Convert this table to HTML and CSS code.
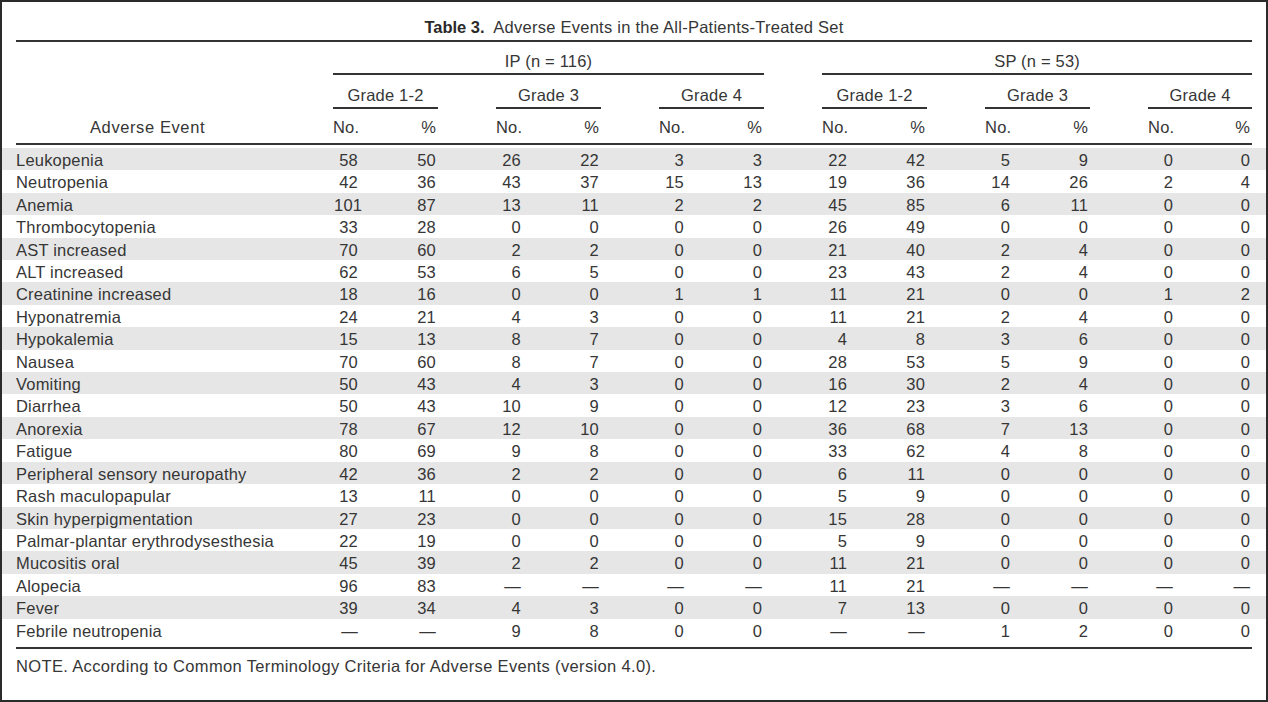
FILE: index.html
```html
<!DOCTYPE html>
<html lang="en">
<head>
<meta charset="utf-8">
<title>Table 3. Adverse Events in the All-Patients-Treated Set</title>
<link rel="stylesheet" href="styles.css">
</head>
<body>
<div class="frame">
  <h1 class="title"><b>Table 3.</b>&nbsp; Adverse Events in the All-Patients-Treated Set</h1>
  <table class="ae">
    <colgroup>
      <col class="c-edge"><col class="c-label">
      <col class="c-n"><col class="c-p"><col class="c-gap">
      <col class="c-n"><col class="c-p"><col class="c-gap">
      <col class="c-n"><col class="c-p"><col class="c-gap">
      <col class="c-n"><col class="c-p"><col class="c-gap">
      <col class="c-n"><col class="c-p"><col class="c-gap">
      <col class="c-n"><col class="c-plast"><col class="c-edge">
    </colgroup>
    <thead>
      <tr class="r1">
        <th class="edge"></th><th></th>
        <th colspan="8" class="ul">IP (n = 116)</th>
        <th></th>
        <th colspan="8" class="ul">SP (n = 53)</th>
        <th class="edge"></th>
      </tr>
      <tr class="r2">
        <th class="edge"></th><th></th>
        <th colspan="2" class="ul">Grade 1-2</th><th></th>
        <th colspan="2" class="ul">Grade 3</th><th></th>
        <th colspan="2" class="ul">Grade 4</th><th></th>
        <th colspan="2" class="ul">Grade 1-2</th><th></th>
        <th colspan="2" class="ul">Grade 3</th><th></th>
        <th colspan="2" class="ul">Grade 4</th>
        <th class="edge"></th>
      </tr>
      <tr class="r3">
        <th class="edge"></th><th class="lbl">Adverse Event</th>
        <th class="n">No.</th><th class="p">%</th><th></th>
        <th class="n">No.</th><th class="p">%</th><th></th>
        <th class="n">No.</th><th class="p">%</th><th></th>
        <th class="n">No.</th><th class="p">%</th><th></th>
        <th class="n">No.</th><th class="p">%</th><th></th>
        <th class="n">No.</th><th class="p">%</th>
        <th class="edge"></th>
      </tr>
    </thead>
    <tbody>
      <tr><td></td><td class="lbl">Leukopenia</td><td class="n">58</td><td class="p">50</td><td></td><td class="n">26</td><td class="p">22</td><td></td><td class="n">3</td><td class="p">3</td><td></td><td class="n">22</td><td class="p">42</td><td></td><td class="n">5</td><td class="p">9</td><td></td><td class="n">0</td><td class="p">0</td><td></td></tr>
      <tr><td></td><td class="lbl">Neutropenia</td><td class="n">42</td><td class="p">36</td><td></td><td class="n">43</td><td class="p">37</td><td></td><td class="n">15</td><td class="p">13</td><td></td><td class="n">19</td><td class="p">36</td><td></td><td class="n">14</td><td class="p">26</td><td></td><td class="n">2</td><td class="p">4</td><td></td></tr>
      <tr><td></td><td class="lbl">Anemia</td><td class="n">101</td><td class="p">87</td><td></td><td class="n">13</td><td class="p">11</td><td></td><td class="n">2</td><td class="p">2</td><td></td><td class="n">45</td><td class="p">85</td><td></td><td class="n">6</td><td class="p">11</td><td></td><td class="n">0</td><td class="p">0</td><td></td></tr>
      <tr><td></td><td class="lbl">Thrombocytopenia</td><td class="n">33</td><td class="p">28</td><td></td><td class="n">0</td><td class="p">0</td><td></td><td class="n">0</td><td class="p">0</td><td></td><td class="n">26</td><td class="p">49</td><td></td><td class="n">0</td><td class="p">0</td><td></td><td class="n">0</td><td class="p">0</td><td></td></tr>
      <tr><td></td><td class="lbl">AST increased</td><td class="n">70</td><td class="p">60</td><td></td><td class="n">2</td><td class="p">2</td><td></td><td class="n">0</td><td class="p">0</td><td></td><td class="n">21</td><td class="p">40</td><td></td><td class="n">2</td><td class="p">4</td><td></td><td class="n">0</td><td class="p">0</td><td></td></tr>
      <tr><td></td><td class="lbl">ALT increased</td><td class="n">62</td><td class="p">53</td><td></td><td class="n">6</td><td class="p">5</td><td></td><td class="n">0</td><td class="p">0</td><td></td><td class="n">23</td><td class="p">43</td><td></td><td class="n">2</td><td class="p">4</td><td></td><td class="n">0</td><td class="p">0</td><td></td></tr>
      <tr><td></td><td class="lbl">Creatinine increased</td><td class="n">18</td><td class="p">16</td><td></td><td class="n">0</td><td class="p">0</td><td></td><td class="n">1</td><td class="p">1</td><td></td><td class="n">11</td><td class="p">21</td><td></td><td class="n">0</td><td class="p">0</td><td></td><td class="n">1</td><td class="p">2</td><td></td></tr>
      <tr><td></td><td class="lbl">Hyponatremia</td><td class="n">24</td><td class="p">21</td><td></td><td class="n">4</td><td class="p">3</td><td></td><td class="n">0</td><td class="p">0</td><td></td><td class="n">11</td><td class="p">21</td><td></td><td class="n">2</td><td class="p">4</td><td></td><td class="n">0</td><td class="p">0</td><td></td></tr>
      <tr><td></td><td class="lbl">Hypokalemia</td><td class="n">15</td><td class="p">13</td><td></td><td class="n">8</td><td class="p">7</td><td></td><td class="n">0</td><td class="p">0</td><td></td><td class="n">4</td><td class="p">8</td><td></td><td class="n">3</td><td class="p">6</td><td></td><td class="n">0</td><td class="p">0</td><td></td></tr>
      <tr><td></td><td class="lbl">Nausea</td><td class="n">70</td><td class="p">60</td><td></td><td class="n">8</td><td class="p">7</td><td></td><td class="n">0</td><td class="p">0</td><td></td><td class="n">28</td><td class="p">53</td><td></td><td class="n">5</td><td class="p">9</td><td></td><td class="n">0</td><td class="p">0</td><td></td></tr>
      <tr><td></td><td class="lbl">Vomiting</td><td class="n">50</td><td class="p">43</td><td></td><td class="n">4</td><td class="p">3</td><td></td><td class="n">0</td><td class="p">0</td><td></td><td class="n">16</td><td class="p">30</td><td></td><td class="n">2</td><td class="p">4</td><td></td><td class="n">0</td><td class="p">0</td><td></td></tr>
      <tr><td></td><td class="lbl">Diarrhea</td><td class="n">50</td><td class="p">43</td><td></td><td class="n">10</td><td class="p">9</td><td></td><td class="n">0</td><td class="p">0</td><td></td><td class="n">12</td><td class="p">23</td><td></td><td class="n">3</td><td class="p">6</td><td></td><td class="n">0</td><td class="p">0</td><td></td></tr>
      <tr><td></td><td class="lbl">Anorexia</td><td class="n">78</td><td class="p">67</td><td></td><td class="n">12</td><td class="p">10</td><td></td><td class="n">0</td><td class="p">0</td><td></td><td class="n">36</td><td class="p">68</td><td></td><td class="n">7</td><td class="p">13</td><td></td><td class="n">0</td><td class="p">0</td><td></td></tr>
      <tr><td></td><td class="lbl">Fatigue</td><td class="n">80</td><td class="p">69</td><td></td><td class="n">9</td><td class="p">8</td><td></td><td class="n">0</td><td class="p">0</td><td></td><td class="n">33</td><td class="p">62</td><td></td><td class="n">4</td><td class="p">8</td><td></td><td class="n">0</td><td class="p">0</td><td></td></tr>
      <tr><td></td><td class="lbl">Peripheral sensory neuropathy</td><td class="n">42</td><td class="p">36</td><td></td><td class="n">2</td><td class="p">2</td><td></td><td class="n">0</td><td class="p">0</td><td></td><td class="n">6</td><td class="p">11</td><td></td><td class="n">0</td><td class="p">0</td><td></td><td class="n">0</td><td class="p">0</td><td></td></tr>
      <tr><td></td><td class="lbl">Rash maculopapular</td><td class="n">13</td><td class="p">11</td><td></td><td class="n">0</td><td class="p">0</td><td></td><td class="n">0</td><td class="p">0</td><td></td><td class="n">5</td><td class="p">9</td><td></td><td class="n">0</td><td class="p">0</td><td></td><td class="n">0</td><td class="p">0</td><td></td></tr>
      <tr><td></td><td class="lbl">Skin hyperpigmentation</td><td class="n">27</td><td class="p">23</td><td></td><td class="n">0</td><td class="p">0</td><td></td><td class="n">0</td><td class="p">0</td><td></td><td class="n">15</td><td class="p">28</td><td></td><td class="n">0</td><td class="p">0</td><td></td><td class="n">0</td><td class="p">0</td><td></td></tr>
      <tr><td></td><td class="lbl">Palmar-plantar erythrodysesthesia</td><td class="n">22</td><td class="p">19</td><td></td><td class="n">0</td><td class="p">0</td><td></td><td class="n">0</td><td class="p">0</td><td></td><td class="n">5</td><td class="p">9</td><td></td><td class="n">0</td><td class="p">0</td><td></td><td class="n">0</td><td class="p">0</td><td></td></tr>
      <tr><td></td><td class="lbl">Mucositis oral</td><td class="n">45</td><td class="p">39</td><td></td><td class="n">2</td><td class="p">2</td><td></td><td class="n">0</td><td class="p">0</td><td></td><td class="n">11</td><td class="p">21</td><td></td><td class="n">0</td><td class="p">0</td><td></td><td class="n">0</td><td class="p">0</td><td></td></tr>
      <tr><td></td><td class="lbl">Alopecia</td><td class="n">96</td><td class="p">83</td><td></td><td class="n">—</td><td class="p">—</td><td></td><td class="n">—</td><td class="p">—</td><td></td><td class="n">11</td><td class="p">21</td><td></td><td class="n">—</td><td class="p">—</td><td></td><td class="n">—</td><td class="p">—</td><td></td></tr>
      <tr><td></td><td class="lbl">Fever</td><td class="n">39</td><td class="p">34</td><td></td><td class="n">4</td><td class="p">3</td><td></td><td class="n">0</td><td class="p">0</td><td></td><td class="n">7</td><td class="p">13</td><td></td><td class="n">0</td><td class="p">0</td><td></td><td class="n">0</td><td class="p">0</td><td></td></tr>
      <tr><td></td><td class="lbl">Febrile neutropenia</td><td class="n">—</td><td class="p">—</td><td></td><td class="n">9</td><td class="p">8</td><td></td><td class="n">0</td><td class="p">0</td><td></td><td class="n">—</td><td class="p">—</td><td></td><td class="n">1</td><td class="p">2</td><td></td><td class="n">0</td><td class="p">0</td><td></td></tr>
    </tbody>
  </table>
  <p class="note">NOTE. According to Common Terminology Criteria for Adverse Events (version 4.0).</p>
</div>
</body>
</html>
```

FILE: styles.css
```css
html, body {
  margin: 0;
  padding: 0;
  background: #ffffff;
}

body {
  font-family: "Liberation Sans", Arial, Helvetica, sans-serif;
  font-size: 16.5px;
  letter-spacing: 0.2px;
  color: #363636;
}

.frame {
  width: 1268px;
  height: 702px;
  box-sizing: border-box;
  border: 2px solid #2b2b2b;
  background: #ffffff;
  overflow: hidden;
}

.title {
  margin: 0;
  padding: 15px 14px 3px;
  font-size: 16.5px;
  font-weight: normal;
  line-height: 20px;
  text-align: center;
  letter-spacing: 0.25px;
  color: #363636;
}

.title b {
  font-weight: bold;
  letter-spacing: 0;
  color: #2a2a2a;
}

.ae {
  width: 100%;
  border-collapse: separate;
  border-spacing: 0;
  table-layout: fixed;
}

.c-edge { width: 14px; }
.c-label { width: 317px; }
.c-n { width: 52px; }
.c-p { width: 53px; }
.c-plast { width: 52px; }
.c-gap { width: 58px; }

.ae th {
  font-weight: normal;
  padding: 0;
  line-height: 20px;
  vertical-align: top;
  text-align: center;
  white-space: nowrap;
}

.r1 th {
  border-top: 2px solid #333333;
  padding-top: 9px;
  padding-bottom: 2px;
}

.r1 th.edge {
  border-top-color: transparent;
}

.r2 th {
  padding-top: 10px;
  padding-bottom: 2px;
}

.r3 th {
  padding-top: 8px;
  padding-bottom: 6px;
  border-bottom: 2px solid #333333;
}

.r3 th.edge {
  border-bottom-color: transparent;
}

.ae th.ul {
  border-bottom: 2px solid #333333;
}

.ae .lbl {
  text-align: left;
}

.r3 th.lbl {
  padding-left: 74px;
  letter-spacing: 0.6px;
}

.ae .n {
  text-align: right;
  padding-right: 27px;
}

.ae .p {
  text-align: right;
  padding-right: 2px;
}

.ae td {
  padding-top: 3px;
  padding-bottom: 0;
  line-height: 19.4px;
  white-space: nowrap;
  vertical-align: top;
}

.ae td.lbl {
  padding-left: 0;
}

.ae tbody tr:first-child td {
  border-top: 3px solid transparent;
}

.ae tbody tr:nth-child(odd) td {
  background: #e6e6e6;
  background-clip: padding-box;
}

.note {
  margin: 6px 14px 0;
  padding-top: 7px;
  border-top: 2px solid #333333;
  line-height: 20px;
  font-size: 16.5px;
  letter-spacing: 0.35px;
}
```
